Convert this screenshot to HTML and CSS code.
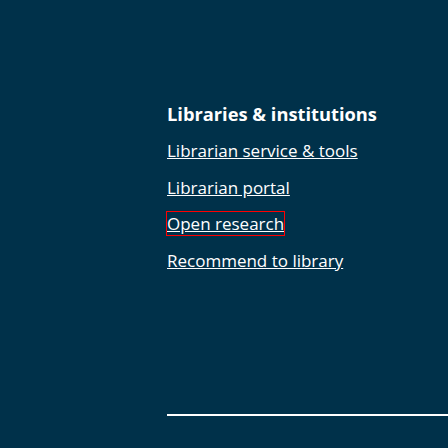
FILE: index.html
```html
<!DOCTYPE html>
<html lang="en">
<head>
<meta charset="utf-8">
<title>Libraries &amp; institutions</title>
<link rel="stylesheet" href="styles.css">
</head>
<body>
<footer class="footer">
  <div class="column">
    <h2 class="heading">Libraries &amp; institutions</h2>
    <ul class="links">
      <li><a href="#">Librarian service &amp; tools</a></li>
      <li><a href="#">Librarian portal</a></li>
      <li><a href="#" class="focused">Open research</a></li>
      <li><a href="#">Recommend to library</a></li>
    </ul>
  </div>
  <div class="rule"></div>
</footer>
</body>
</html>
```
FILE: styles.css
```css
html, body {
  margin: 0;
  padding: 0;
  background: #00314a;
  height: 100%;
  overflow: hidden;
}
body {
  font-family: "Open Sans", "Noto Sans", sans-serif;
  color: #ffffff;
}
.footer {
  display: flex;
  flex-direction: column;
  padding-left: 167px;
  padding-top: 101.4px;
}
.column {
  display: flex;
  flex-direction: column;
}
.heading {
  margin: 0;
  font-size: 18.3px;
  font-weight: 700;
  line-height: 26px;
}
.links {
  list-style: none;
  margin: 11.5px 0 0;
  padding: 0;
  display: flex;
  flex-direction: column;
  gap: 12.7px;
}
.links li {
  line-height: 24px;
}
.links a {
  color: #ffffff;
  font-size: 17px;
  line-height: 24px;
  text-decoration: underline;
}
.focused {
  outline: 1px solid #ff0000;
}
.rule {
  margin-top: 141px;
  height: 2px;
  background: #ffffff;
}
```
